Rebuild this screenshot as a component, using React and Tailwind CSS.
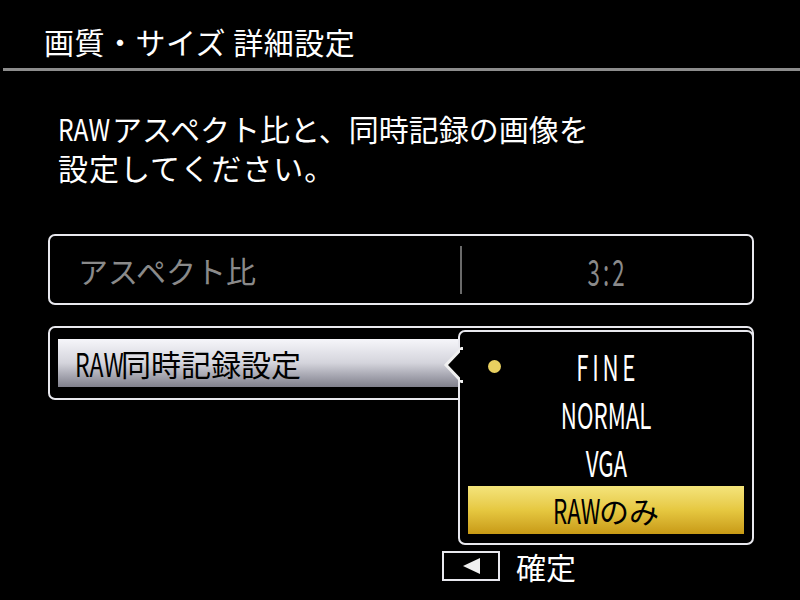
export default function App() {
  const font = { fontFamily: '"Noto Sans CJK JP", "Noto Sans", sans-serif' };

  return (
    <div
      className="w-[800px] h-[600px] bg-black overflow-hidden flex flex-col text-white"
      style={font}
    >
      {/* Title */}
      <div className="pl-[44px] pt-[22px] h-[68px] text-[30px] leading-[38px] tracking-[0.5px]">
        画質・サイズ 詳細設定
      </div>
      <div className="ml-[3px] h-[3px] bg-[#8c8c8c]" />

      {/* Description */}
      <div className="pl-[58px] pt-[38px] text-[30px] leading-[39px] flex flex-col">
        <div className="flex items-center h-[39px]">
          <span className="flex items-center w-[54px] h-[39px]">
            <span className="block leading-[39px] origin-left scale-x-[0.82]">RAW</span>
          </span>
          <span>アスペクト比と、同時記録の画像を</span>
        </div>
        <div className="h-[39px] tracking-[1px]">設定してください。</div>
      </div>

      {/* Aspect ratio row */}
      <div className="ml-[48px] mt-[47px] w-[706px] h-[71px] border-2 border-[#e8e8ee] rounded-[7px] flex items-center text-[#8a8a8a]">
        <div className="w-[410px] pl-[28px] text-[30px] leading-none">アスペクト比</div>
        <div className="w-[2px] h-[48px] bg-[#6a6a6a]" />
        <div className="flex-1 flex justify-center pr-[2px]">
          <span className="inline-block text-[36px] leading-none tracking-[5px] pl-[5px] scale-x-[0.62]">3:2</span>
        </div>
      </div>

      {/* RAW row + dropdown */}
      <div className="relative ml-[48px] mt-[21px] w-[706px] h-[74px]">
        <div className="w-full h-full border-2 border-[#e8e8ee] rounded-[7px] flex items-center pl-[8px]">
          <div className="w-[400px] h-[48px] bg-gradient-to-b from-[#f6f6fa] via-[#d4d4dc] to-[#80808c] flex items-center pl-[17px] text-black text-[30px] leading-none">
            <span className="inline-block w-[46px]">
              <span className="inline-block origin-left scale-x-[0.72] text-[32px]">RAW</span>
            </span>
            <span>同時記録設定</span>
          </div>
        </div>

        {/* dropdown menu */}
        <div className="absolute left-[410px] top-[4px] w-[296px] h-[215px] bg-black border-2 border-[#e8e8ee] rounded-[7px] flex flex-col pt-[9px] px-[8px]">
          <svg
            className="absolute left-[-17px] top-[15px]"
            width="20"
            height="36"
            viewBox="0 0 20 36"
          >
            <polygon points="19,1 3,18 19,35" fill="black" stroke="#f0f0f0" strokeWidth="3" />
            <rect x="17" y="3" width="4" height="30" fill="black" />
          </svg>
          <div className="relative h-[48px] flex items-center justify-center leading-none">
            <span className="absolute left-[20px] top-[19px] w-[13px] h-[13px] rounded-full bg-[#e8d060]" />
            <span className="inline-block text-[36px] tracking-[6px] scale-x-[0.62] pl-[6px]">FINE</span>
          </div>
          <div className="h-[48px] flex items-center justify-center leading-none">
            <span className="inline-block text-[36px] scale-x-[0.62]">NORMAL</span>
          </div>
          <div className="h-[48px] flex items-center justify-center leading-none">
            <span className="inline-block text-[36px] scale-x-[0.62]">VGA</span>
          </div>
          <div className="h-[48px] mt-[1px] bg-gradient-to-b from-[#f4e47a] via-[#e6c840] to-[#c89a14] flex items-center justify-center text-black text-[30px] leading-none">
            <span className="inline-block w-[46px]">
              <span className="inline-block origin-left scale-x-[0.66] text-[34px]">RAW</span>
            </span>
            <span>のみ</span>
          </div>
        </div>
      </div>

      {/* Footer */}
      <div className="mt-[151px] ml-[442px] flex items-center gap-[16px]">
        <div className="w-[58px] h-[30px] border-2 border-[#e8e8ee] flex items-center justify-center">
          <svg width="20" height="18" viewBox="0 0 20 18">
            <polygon points="2,9 19,1 19,17" fill="#f0f0f0" />
          </svg>
        </div>
        <div className="text-[30px] leading-none">確定</div>
      </div>
    </div>
  );
}
